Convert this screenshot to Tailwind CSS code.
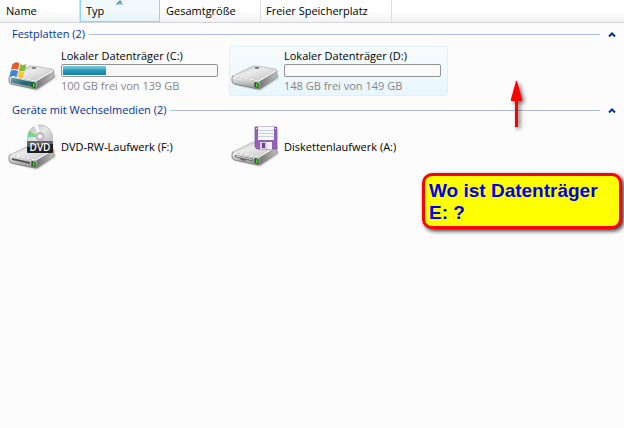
<!DOCTYPE html>
<html lang="de">
<head>
<meta charset="utf-8">
<title>Computer</title>
<script src="https://cdn.jsdelivr.net/npm/@tailwindcss/browser@4"></script>
</head>
<body class="relative min-h-screen bg-[#fcfcfc] font-['Open_Sans','Noto_Sans',sans-serif] text-[11px] leading-4 text-black">
<svg class="absolute size-0" aria-hidden="true">
  <defs>
    <linearGradient id="top" x1="0" y1="0" x2="1" y2="1"><stop offset="0" stop-color="#b4b4b4"/><stop offset=".4" stop-color="#ececec"/><stop offset="1" stop-color="#bcbcbc"/></linearGradient>
    <linearGradient id="front" x1="0" y1="0" x2="0" y2="1"><stop offset="0" stop-color="#f8f8f8"/><stop offset=".5" stop-color="#c4c4c4"/><stop offset="1" stop-color="#8a8a8a"/></linearGradient>
    <linearGradient id="side" x1="0" y1="0" x2="1" y2="0"><stop offset="0" stop-color="#777"/><stop offset="1" stop-color="#bcbcbc"/></linearGradient>
    <linearGradient id="teal" x1="0" y1="0" x2="1" y2="1"><stop offset="0" stop-color="#7aa0aa"/><stop offset=".6" stop-color="#1d6675"/><stop offset="1" stop-color="#3c7f66"/></linearGradient>
    <linearGradient id="disc" x1="0" y1="0" x2="1" y2="1"><stop offset="0" stop-color="#bbb"/><stop offset=".45" stop-color="#e8e8e8"/><stop offset="1" stop-color="#a9a9a9"/></linearGradient>
    <filter id="soft" x="-20%" y="-40%" width="140%" height="180%"><feGaussianBlur stdDeviation="1.2"/></filter>
    <g id="drive">
      <path d="M4 41L29 47L48 34L45 31L20 40Z" fill="#000" opacity=".35" filter="url(#soft)"/>
      <path d="M2 33L20 24Q22 23 25 23L44 26Q46 27 46 28L29 38Z" fill="url(#top)" stroke="#a0a0a0" stroke-width=".6"/>
      <path d="M2 33Q1 33 1 35V38Q1 40 3 41L27 46Q29 46 29 45V39Q29 38 27 38Z" fill="url(#front)" stroke="#777" stroke-width=".8"/>
      <path d="M29 38L46 28V33Q46 35 44 36L29 46Z" fill="url(#side)" stroke="#888" stroke-width=".6"/>
      <path d="M3 33L28 38L45 28" fill="none" stroke="#fff" stroke-width="1"/>
      <ellipse cx="26" cy="25" rx="2.3" ry=".9" fill="#777"/>
    </g>
    <g id="led"><path d="M23.500 39L27.500 40V45L23.500 44Z" fill="#123d10"/><path d="M24.700 40L26.700 40.500V44.300L24.700 43.800Z" fill="#2cdd20"/></g>
  </defs>
</svg>

<div class="flex h-[23px] border-b border-[#d5d5d5] bg-linear-to-b from-white from-45% to-[#f1f2f4]" role="toolbar" aria-label="Sortierung">
  <button class="w-20 border-r border-[#dedfe1] pl-1.5 text-left">Name</button>
  <button class="relative w-20 border-x border-b border-[#8fd6f5] bg-linear-to-b from-[#f2f9fc] from-50% to-[#e3f3fb] pl-[5px] text-left">Typ
    <svg class="absolute top-0 left-1/2 h-[5px] w-2 -translate-x-1/2" viewBox="0 0 8 5"><path d="M4 .7L7.500 4.500H.5Z" fill="#79aec8"/><path d="M.5 4.500L4 .7L5 2" fill="none" stroke="#3c6d88"/></svg>
  </button>
  <button class="w-[101px] border-r border-[#dedfe1] pl-1.5 text-left">Gesamtgröße</button>
  <button class="w-[131px] border-r border-[#dedfe1] pl-[5px] text-left">Freier Speicherplatz</button>
</div>

<main>
  <section class="mb-[3px]">
    <h2 class="flex h-[22px] items-center pr-2 pl-3 text-[#003399]">
      <span class="shrink-0">Festplatten (2)</span>
      <span class="mr-2 ml-1 h-px grow bg-[#b0bcdc]"></span>
      <button class="flex h-4 w-2 items-center" aria-label="Festplatten einklappen"><svg class="h-[5px] w-2" viewBox="0 0 8 5"><path d="M1 4.500L4 1.500L7 4.500" fill="none" stroke="#003399" stroke-width="2"/></svg></button>
    </h2>
    <div class="mt-px flex flex-wrap gap-1 pl-1.5">
      <article class="flex h-[50px] w-[219px] items-center rounded-[3px] border border-transparent pl-px">
        <svg class="mr-[5px] h-[50px] w-12 shrink-0" viewBox="0 0 48 50">
          <g transform="translate(0 -3)"><use href="#drive"/>
          <path d="M3 34.500L27 39.500V44.500L3 39.500Z" fill="url(#teal)"/><use href="#led"/></g>
          <path d="M4.500 18Q8.500 15 11.500 17.500L10 24Q7 22 3 24Z" fill="#e55d24"/>
          <path d="M12.500 18Q15 20 18.500 18L17 24.500Q14 26 11 24.500Z" fill="#80b83b"/>
          <path d="M2.700 25Q6.500 23 10 25L8.500 31Q5.500 29 1.500 31Z" fill="#3d86d7"/>
          <path d="M11 25.500Q13.500 27 16.500 25.500L15 31.500Q12 33 9.500 31Z" fill="#ffc928"/>
        </svg>
        <div class="w-[157px]">
          <h3 class="leading-[14px]">Lokaler Datenträger (C:)</h3>
          <div class="my-px flex h-[13px] rounded-[2px] border border-[#929292] bg-[#f8f8f8] p-px" role="meter" aria-label="Belegt auf C:" aria-valuenow="39" aria-valuemin="0" aria-valuemax="139"><span class="bg-linear-to-b from-[#72c8da] from-10% via-[#2799b6] via-50% to-[#1680a1]" style="width:28%"></span></div>
          <p class="leading-4 text-[#858585]">100 GB frei von 139 GB</p>
        </div>
      </article>
      <article class="flex h-[50px] w-[219px] items-center rounded-[3px] border border-[#dcf1fb] bg-linear-to-b from-[#f8fcfe] to-[#e8f6fd] pl-px">
        <svg class="mr-[5px] h-[50px] w-12 shrink-0" viewBox="0 0 48 50"><g transform="translate(0 -3)"><use href="#drive"/><use href="#led"/></g></svg>
        <div class="w-[157px]">
          <h3 class="leading-[14px]">Lokaler Datenträger (D:)</h3>
          <div class="my-px h-[13px] rounded-[2px] border border-[#929292] bg-[#fafafa]" role="meter" aria-label="Belegt auf D:" aria-valuenow="1" aria-valuemin="0" aria-valuemax="149"></div>
          <p class="leading-4 text-[#858585]">148 GB frei von 149 GB</p>
        </div>
      </article>
    </div>
  </section>

  <section>
    <h2 class="flex h-[22px] items-center pr-2 pl-3 text-[#003399]">
      <span class="shrink-0">Geräte mit Wechselmedien (2)</span>
      <span class="mr-2 ml-1 h-px grow bg-[#b0bcdc]"></span>
      <button class="flex h-4 w-2 items-center" aria-label="Geräte mit Wechselmedien einklappen"><svg class="h-[5px] w-2" viewBox="0 0 8 5"><path d="M1 4.500L4 1.500L7 4.500" fill="none" stroke="#003399" stroke-width="2"/></svg></button>
    </h2>
    <div class="mt-px flex flex-wrap gap-1 pl-1.5">
      <article class="flex h-[50px] w-[219px] items-center rounded-[3px] border border-transparent pl-px">
        <svg class="mr-[5px] h-[50px] w-12 shrink-0" viewBox="0 0 48 50">
          <use href="#drive"/>
          <path d="M4 36L22 40V42L4 38Z" fill="#555"/><use href="#led"/>
          <circle cx="32" cy="15.500" r="12.500" fill="url(#disc)" stroke="#aaa" stroke-width=".7"/>
          <path d="M32 15L20 12L21 9Z" fill="#78d850"/><path d="M32 15L20 15L20 12Z" fill="#6bd2c8"/><path d="M32 16L44 19L42 22Z" fill="#dcbaec"/><path d="M32 14L26 4L30 3Z" fill="#fff"/>
          <circle cx="32" cy="14.500" r="4" fill="#ccc" stroke="#999" stroke-width=".6"/><circle cx="32" cy="14.500" r="1.700" fill="#fff"/>
          <rect x="19" y="19" width="26" height="12" rx="1" fill="#202020"/><path d="M19 19H45V22Q32 22 19 25Z" fill="#666"/>
          <text x="32" y="28.500" text-anchor="middle" font-family="Open Sans, sans-serif" font-size="10" font-weight="600" fill="#fff">DVD</text>
        </svg>
        <h3>DVD-RW-Laufwerk (F:)</h3>
      </article>
      <article class="flex h-[50px] w-[219px] items-center rounded-[3px] border border-transparent pl-px">
        <svg class="mr-[5px] h-[50px] w-12 shrink-0" viewBox="0 0 48 50">
          <g transform="translate(0 -3)"><use href="#drive"/>
          <path d="M4 36L22 39.500V42.500L16 41L14 42L10 41L9 39.500L4 38Z" fill="#6a6a6a"/><path d="M5 37L21 40.500" stroke="#ddd"/><use href="#led"/></g>
          <path d="M24 5H46V27H26L24 25Z" fill="#9562b5" stroke="#7a4a9c" stroke-width=".7"/>
          <rect x="27" y="5" width="16" height="13" fill="#f6f9fc"/><path d="M27 8.500H43M27 11.500H43M27 14.500H43" stroke="#c4d2df"/>
          <rect x="29" y="20" width="12" height="7" fill="#d5cfda"/><rect x="31" y="21" width="3" height="5" fill="#6b3f8a"/><rect x="36" y="20" width="5" height="7" fill="#f1edf4"/>
          <path d="M25 6.500H26M44 6.500H45" stroke="#fff"/>
        </svg>
        <h3>Diskettenlaufwerk (A:)</h3>
      </article>
    </div>
  </section>
</main>

<svg class="absolute top-[78px] left-[506px] h-[56px] w-7 drop-shadow-[2px_2px_2px_rgba(0,0,0,0.6)]" viewBox="0 0 28 56" aria-hidden="true"><path d="M10 3H11L16 21V23H12V49H9V23H5V21Z" fill="#f00"/></svg>
<aside class="absolute top-[173px] left-[422px] w-[200px] rounded-[10px] border-3 border-[#f00] bg-[#ff0] px-1 pt-1 pb-0.5 font-['Liberation_Sans',Arial,sans-serif] text-[19px] leading-[22px] font-bold text-[#0000f0] shadow-[2px_2px_4px_rgba(0,0,0,0.8)]">Wo ist Datenträger E: ?</aside>
</body>
</html>
